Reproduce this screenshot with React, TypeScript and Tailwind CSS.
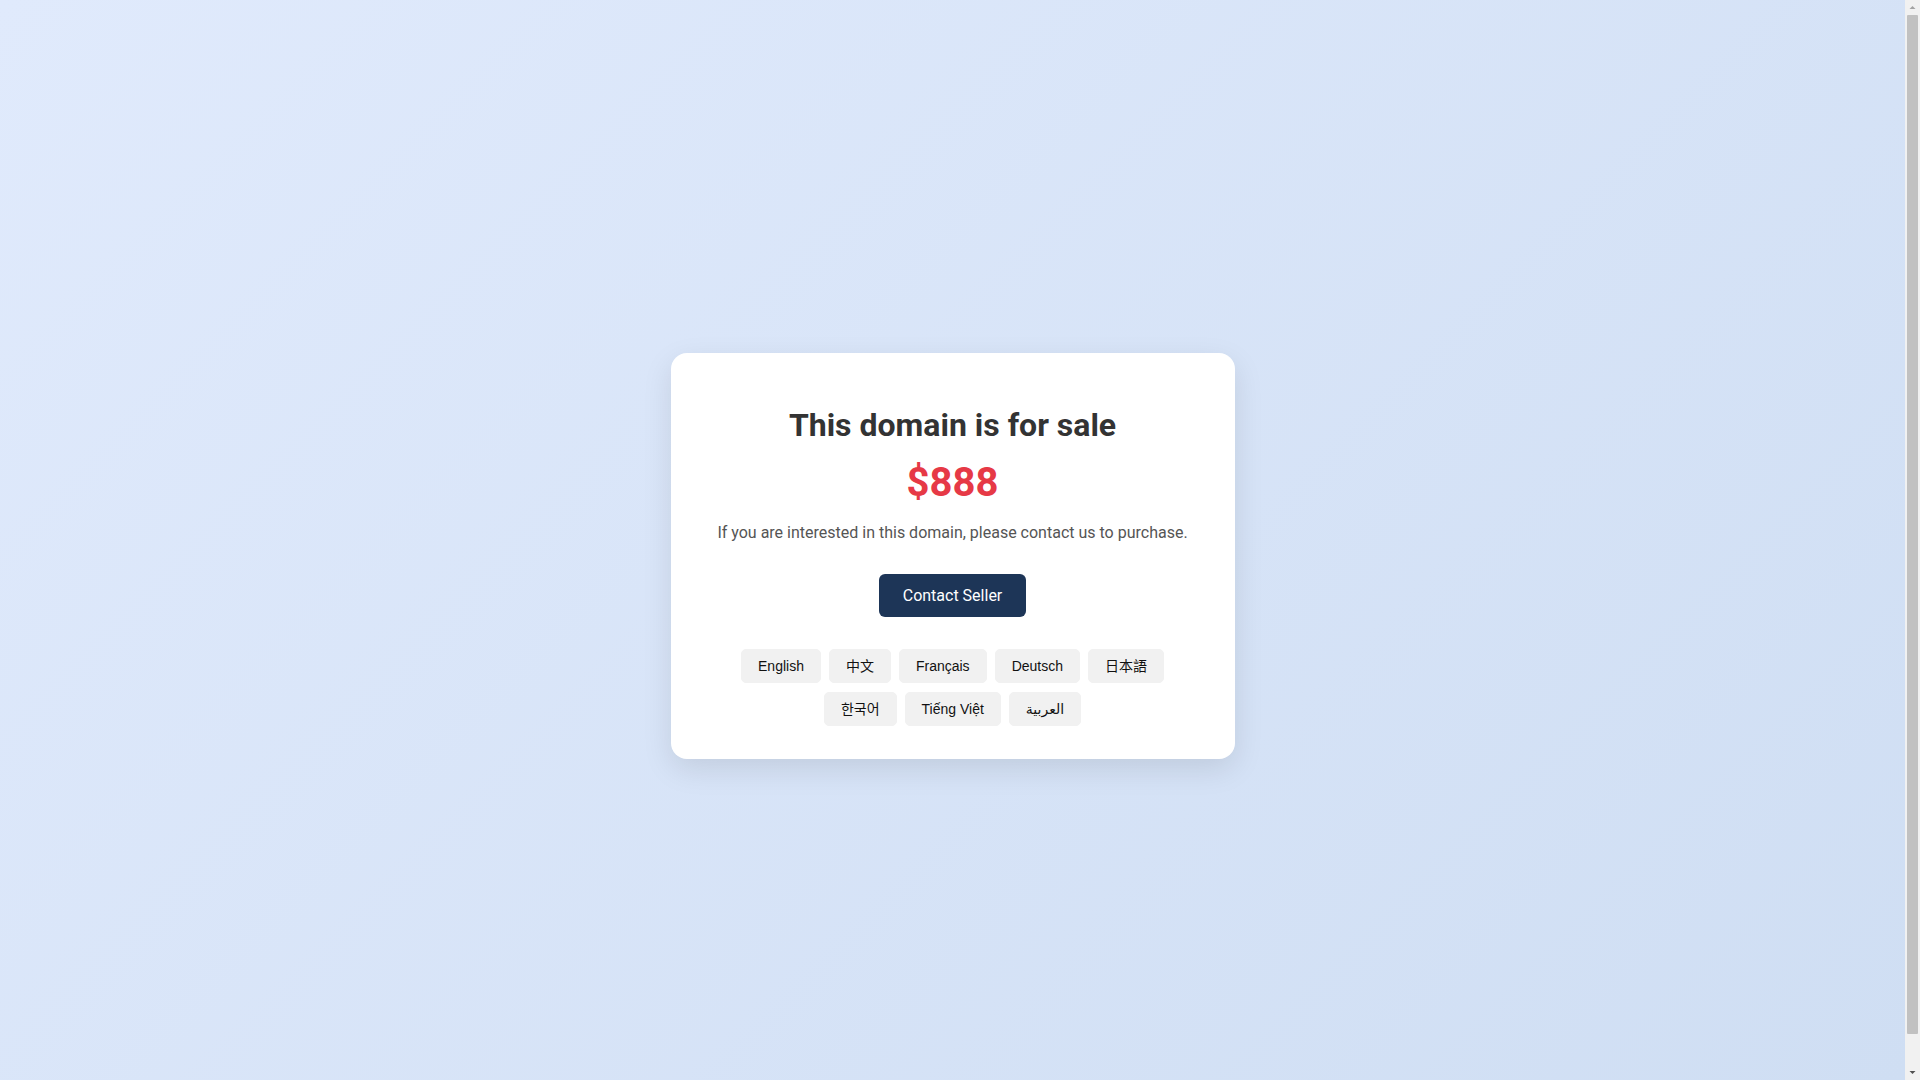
const LANGUAGES = [
  "English",
  "中文",
  "Français",
  "Deutsch",
  "日本語",
  "한국어",
  "Tiếng Việt",
  "العربية",
];

const ScrollBar = () => (
  <div className="flex w-[15px] shrink-0 flex-col items-center bg-[#f1f1f1]">
    <svg width="15" height="15" viewBox="0 0 15 15" className="shrink-0">
      <path d="M4.5 9h6l-3-3z" fill="#a3a3a3" />
    </svg>
    <div className="w-[11px] flex-1 rounded-[1px] bg-[#c1c1c1]" />
    <div className="h-[31px] shrink-0" />
    <svg width="15" height="15" viewBox="0 0 15 15" className="shrink-0">
      <path d="M4.5 6h6l-3 3z" fill="#505050" />
    </svg>
  </div>
);

export default function App() {
  return (
    <div className="flex h-screen overflow-hidden font-['Roboto',sans-serif]">
      <div className="flex-1 overflow-hidden bg-[linear-gradient(135deg,#e0eafc,#cfdef3)]">
        <div className="flex min-h-[calc(100vh+32px)] items-center justify-center">
          <div className="w-[564px] rounded-2xl bg-white px-8 pt-[53px] pb-[33px] text-center shadow-[0_10px_30px_rgba(0,0,0,0.1)]">
            <h1 className="text-[32px] font-bold leading-[normal] text-[#333]">
              This domain is for sale
            </h1>
            <div className="mt-[15px] text-[40px] font-bold leading-[normal] text-[#e63946]">
              $888
            </div>
            <p className="mt-[17px] text-base leading-[normal] text-[#555]">
              If you are interested in this domain, please contact us to purchase.
            </p>
            <button className="mt-8 rounded-md bg-[#1d3557] px-6 py-3 text-base leading-[normal] text-white">
              Contact Seller
            </button>
            <div className="mt-8 flex flex-wrap justify-center gap-x-2 gap-y-[9px]">
              {LANGUAGES.map((lang) => (
                <button
                  key={lang}
                  className="flex h-[34px] items-center rounded-[5px] border border-[#f1f1f1] bg-[#f1f1f1] px-4 font-['Liberation_Sans','Noto_Sans_CJK_SC','DejaVu_Sans',sans-serif] text-sm text-[#111]"
                >
                  {lang}
                </button>
              ))}
            </div>
          </div>
        </div>
      </div>
      <ScrollBar />
    </div>
  );
}
